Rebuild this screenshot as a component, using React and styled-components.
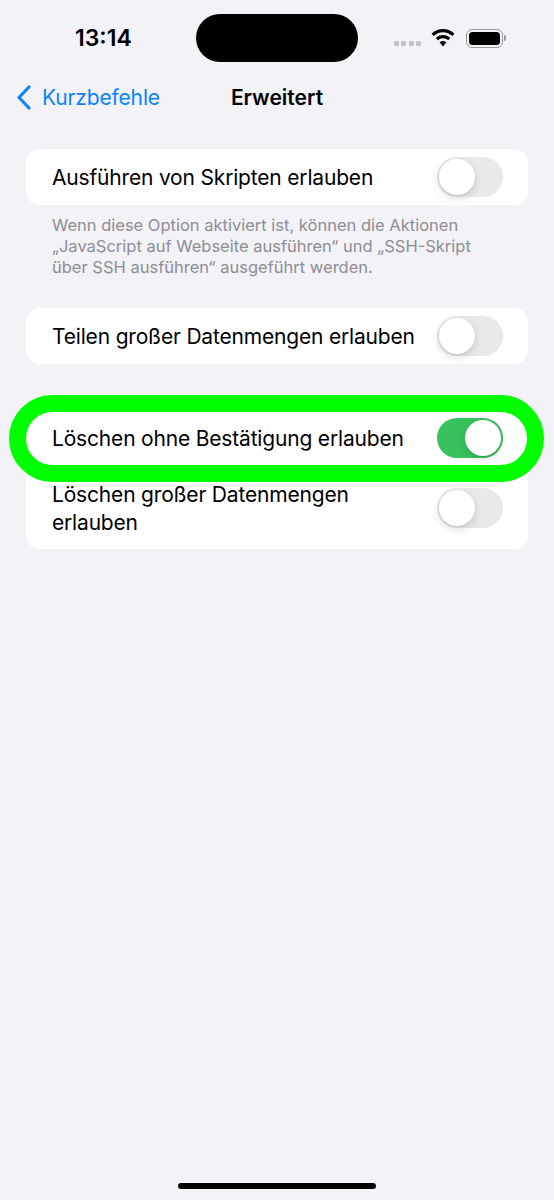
import React from 'react'
import styled, { createGlobalStyle } from 'styled-components'

const GlobalStyle = createGlobalStyle`
html, body {
    margin: 0;
    padding: 0;
    background: #f2f2f7;
}
* {
    box-sizing: border-box;
}
`

const Toggle = ({ on }) => (
    <Track $on={on}>
        <Knob $on={on} />
    </Track>
)

const App = () => {
    return (
        <Page>
            <GlobalStyle />
            <StatusBar>
                <Time>13:14</Time>
                <Island />
                <StatusIcons>
                    <Dots>
                        <Dot />
                        <Dot />
                        <Dot />
                        <Dot />
                    </Dots>
                    <svg width="24" height="18" viewBox="0 0 25 19">
                        <path d="M12.5 0C7.8 0 3.5 1.9.4 5l2.3 2.4c2.5-2.5 6-4 9.8-4s7.3 1.5 9.8 4L24.6 5C21.5 1.9 17.2 0 12.5 0z" fill="#000" />
                        <path d="M12.5 6.4c-3 0-5.7 1.2-7.7 3.1l2.3 2.4c1.4-1.3 3.3-2.2 5.4-2.2s4 .9 5.4 2.2l2.3-2.4c-2-1.9-4.7-3.1-7.7-3.1z" fill="#000" />
                        <path d="M12.5 12.6c-1.4 0-2.7.6-3.6 1.4l3.6 4.4 3.6-4.4c-.9-.8-2.2-1.4-3.6-1.4z" fill="#000" />
                    </svg>
                    <Battery>
                        <BatteryFill />
                    </Battery>
                    <BatteryCap />
                </StatusIcons>
            </StatusBar>
            <NavBar>
                <BackLink>
                    <BackIcon width="15" height="25" viewBox="0 0 15 25">
                        <path d="M13 2 L3 12.5 L13 23" fill="none" stroke="#0a84ff" strokeWidth="3.2" strokeLinecap="round" strokeLinejoin="round" />
                    </BackIcon>
                    Kurzbefehle
                </BackLink>
                <Title>Erweitert</Title>
            </NavBar>
            <Content>
                <Card>
                    <Row>
                        <Label>Ausführen von Skripten erlauben</Label>
                        <Toggle />
                    </Row>
                </Card>
                <Note>
                    Wenn diese Option aktiviert ist, können die Aktionen
                    <br />
                    „JavaScript auf Webseite ausführen“ und „SSH-Skript
                    <br />
                    über SSH ausführen“ ausgeführt werden.
                </Note>
                <Card>
                    <Row>
                        <Label>Teilen großer Datenmengen erlauben</Label>
                        <Toggle />
                    </Row>
                </Card>
                <LastCard>
                    <HighlightRow>
                        <Label>Löschen ohne Bestätigung erlauben</Label>
                        <Toggle on />
                        <Ring />
                    </HighlightRow>
                    <TallRow>
                        <Label>
                            Löschen großer Datenmengen
                            <br />
                            erlauben
                        </Label>
                        <Toggle />
                    </TallRow>
                </LastCard>
            </Content>
            <HomeBar />
        </Page>
    )
}

export default App

const Page = styled.div`
width: 554px;
height: 1200px;
display: flex;
flex-direction: column;
background: #f2f2f7;
font-family: Inter, "Liberation Sans", sans-serif;
color: #000;
overflow: hidden;
`

const StatusBar = styled.div`
flex: none;
height: 76px;
padding: 14px 0 0 75px;
display: flex;
align-items: flex-start;
`

const Time = styled.div`
flex: none;
width: 121px;
height: 48px;
line-height: 48px;
font-size: 23px;
font-weight: 600;
`

const Island = styled.div`
flex: none;
width: 162px;
height: 48px;
border-radius: 24px;
background: #000;
`

const StatusIcons = styled.div`
flex: none;
height: 48px;
padding-left: 36px;
display: flex;
align-items: center;
`

const Dots = styled.div`
flex: none;
width: 27px;
display: flex;
justify-content: space-between;
margin: 11px 10px 0 0;
`

const Dot = styled.span`
width: 5px;
height: 5px;
border-radius: 1.5px;
background: #c4c4c6;
`

const Battery = styled.div`
flex: none;
width: 37px;
height: 19px;
margin-left: 11px;
padding: 2px;
border: 1.5px solid #9a9a9c;
border-radius: 6px;
`

const BatteryFill = styled.div`
width: 100%;
height: 100%;
border-radius: 3.5px;
background: #000;
`

const BatteryCap = styled.div`
flex: none;
width: 2px;
height: 6px;
margin-left: 1px;
border-radius: 0 2px 2px 0;
background: #9a9a9c;
`

const NavBar = styled.div`
flex: none;
height: 42px;
padding: 0 17px;
display: grid;
grid-template-columns: 1fr auto 1fr;
align-items: center;
`

const BackLink = styled.div`
display: flex;
align-items: center;
gap: 11px;
font-size: 21px;
letter-spacing: -0.15px;
color: #0a84ff;
`

const BackIcon = styled.svg`
margin-left: -1px;
`

const Title = styled.div`
font-size: 21px;
font-weight: 600;
`

const Content = styled.div`
padding: 31px 26px 0;
display: flex;
flex-direction: column;
`

const Card = styled.div`
background: #fff;
border-radius: 14px;
`

const LastCard = styled(Card)`
margin-top: 48px;
`

const Row = styled.div`
position: relative;
height: 56px;
padding: 0 25px 0 26px;
display: flex;
align-items: center;
justify-content: space-between;
`

const HighlightRow = styled(Row)`
height: 53px;
padding-bottom: 1px;
`

const TallRow = styled(Row)`
height: 84px;
padding-top: 2px;
`

const Label = styled.div`
padding-top: 2px;
font-size: 21px;
line-height: 28px;
letter-spacing: -0.18px;
`

const Note = styled.div`
padding: 10px 26px 30px;
font-size: 16.5px;
line-height: 21px;
color: #8e8e93;
`

const Track = styled.div`
flex: none;
width: 66px;
height: 40px;
padding: 2px;
border-radius: 20px;
background: ${props => (props.$on ? '#38c25e' : '#e9e9ea')};
display: flex;
justify-content: ${props => (props.$on ? 'flex-end' : 'flex-start')};
`

const Knob = styled.div`
width: 36px;
height: 36px;
border-radius: 50%;
background: #fff;
box-shadow: 0 3px 8px rgba(0, 0, 0, 0.15), 0 1px 1px rgba(0, 0, 0, 0.06);
`

const Ring = styled.div`
position: absolute;
top: -17px;
left: -17px;
right: -16px;
bottom: -17px;
border: 17px solid #00ff00;
border-radius: 44px;
pointer-events: none;
`

const HomeBar = styled.div`
flex: none;
width: 198px;
height: 6px;
margin: auto auto 11px;
border-radius: 3px;
background: #000;
`
